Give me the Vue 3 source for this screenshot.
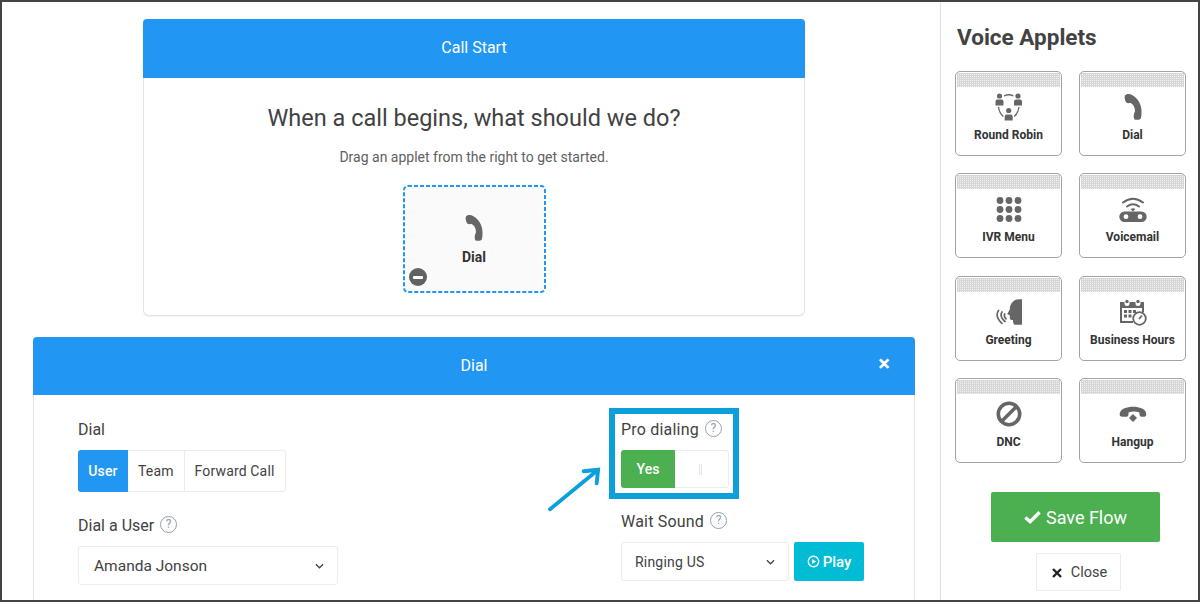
<template>
  <div class="frame">
    <svg class="defs" aria-hidden="true">
      <symbol id="i-phone" viewBox="0 -1 18 27">
        <path d="M1 1.500C3-.5 6-.2 8 1c5.500 3 9.500 9 9.500 16 0 3 0 6-1 8-1.500 1-4.500 1-6 .5-1-1.500-1-4.500-.3-6.500.6-.5.8-1.500.7-3-.2-3.500-1.800-5.500-4.200-7-1.500 0-3 .5-4.500-.5C1 6 0 3.500 1 1.500Z" />
      </symbol>
      <symbol id="i-robin" viewBox="0 0 28 28">
        <circle cx="4.500" cy="3" r="2.600" />
        <circle cx="23" cy="3" r="2.600" />
        <circle cx="13.700" cy="17.500" r="2.600" />
        <path d="M.5 8.500q0-2 2-2h4q2 0 2 2v4h-8ZM19 8.500q0-2 2-2h4q2 0 2 2v4h-8ZM9.700 23.500q0-2 2-2h4q2 0 2 2v4h-8Z" />
        <path d="M9 3q4.700-2.500 9.500 0M3.500 14q.8 6 4.800 9.500M24 14q-.8 6-4.800 9.500" fill="none" stroke="currentColor" stroke-width="1.300" />
      </symbol>
      <symbol id="i-grid" viewBox="0 0 26 28">
        <circle cx="4" cy="5.500" r="3.400" /><circle cx="13" cy="5.500" r="3.400" /><circle cx="22" cy="5.500" r="3.400" />
        <circle cx="4" cy="14.500" r="3.400" /><circle cx="13" cy="14.500" r="3.400" /><circle cx="22" cy="14.500" r="3.400" />
        <circle cx="4" cy="23.500" r="3.400" /><circle cx="13" cy="23.500" r="3.400" /><circle cx="22" cy="23.500" r="3.400" />
      </symbol>
      <symbol id="i-voicemail" viewBox="0 0 28 28">
        <path d="M4 7.500Q14 0 24 7.500M8 11.500q6-4.500 12 0" fill="none" stroke="currentColor" stroke-width="2" stroke-linecap="round" />
        <path d="M11.500 14q2.500-1.500 5 0L14 16.500Z" />
        <path fill-rule="evenodd" d="M5.500 16.500h17a5.200 5.200 0 0 1 0 10.400h-17a5.200 5.200 0 0 1 0-10.400ZM7 19.300a2.400 2.400 0 1 0 0 4.800 2.400 2.400 0 0 0 0-4.800ZM21 19.300a2.400 2.400 0 1 0 0 4.800 2.400 2.400 0 0 0 0-4.800Z" />
      </symbol>
      <symbol id="i-greeting" viewBox="0 0 28 28">
        <path d="M27 1.300V26.700H19.500c-1.500-1-1.500-3-1.500-4.700-2 .2-3.200-.3-3.200-2.300v-2.500l-2-.7c-.6-.5-.6-1 0-1.500l2-3.500C14.800 5.500 19 1.300 24 1.300Z" />
        <path d="M3.500 12.500q-4 6 3.500 13M7 14q-2.800 4.500 3 9.500M9.700 16q-1.200 2.300 1.300 4.800" fill="none" stroke="currentColor" stroke-width="1.700" stroke-linecap="round" />
      </symbol>
      <symbol id="i-calendar" viewBox="0 0 28 28">
        <path fill-rule="evenodd" d="M1 4h4.500v1.500a2.500 2.500 0 0 0 5 0V4h6v1.500a2.500 2.500 0 0 0 5 0V4H25v10.500h-2V10H3v13h11v2H1Z" />
        <circle cx="8" cy="3.500" r="1.700" /><circle cx="19" cy="3.500" r="1.700" />
        <path d="M5 12h3v3H5ZM9.500 12h3v3h-3ZM14 12h3v3h-3ZM5 16.500h3v3H5ZM9.500 16.500h3v3h-3Z" />
        <circle cx="20.500" cy="20.500" r="6.300" fill="#fff" stroke="currentColor" stroke-width="1.800" />
        <path d="m20 21 3-3.500" fill="none" stroke="currentColor" stroke-width="1.800" />
      </symbol>
      <symbol id="i-ban" viewBox="0 0 26 28">
        <circle cx="13" cy="14" r="10.700" fill="none" stroke="currentColor" stroke-width="3.600" />
        <path d="M6 21 20 7" fill="none" stroke="currentColor" stroke-width="3.600" />
      </symbol>
      <symbol id="i-hangup" viewBox="0 0 28 28">
        <g transform="translate(0 4.500)">
          <path d="M1 11.500C0 8 2 5.500 5 4c5.500-2.500 12.500-2.500 18 0 3 1.500 5 4 4 7.500-1.500 1-4 1-5.500.5-1-1-1.200-2.500-1-4-3.800-1.200-7.200-1.200-11 0 .2 1.500 0 3-1 4-1.500.5-6 .5-7.500-.5Z" />
          <path d="M14 9.500l4 4-4 4-4-4Z" />
        </g>
      </symbol>
    </svg>

    <main class="canvas">
      <section class="start-card">
        <header class="bar">Call Start</header>
        <div class="start-body">
          <h1>When a call begins, what should we do?</h1>
          <p>Drag an applet from the right to get started.</p>
          <div class="drop">
            <svg class="drop-border"><rect x="1" y="1" width="141" height="106" rx="4" /></svg>
            <svg class="drop-icon"><use href="#i-phone" /></svg>
            <strong>Dial</strong>
            <span class="remove"><i></i></span>
          </div>
        </div>
      </section>

      <section class="panel">
        <header class="bar">
          Dial
          <span class="close-x">×</span>
        </header>
        <div class="panel-body">
          <div class="col-left">
            <label>Dial</label>
            <div class="btn-group">
              <span class="seg active">User</span>
              <span class="seg">Team</span>
              <span class="seg">Forward Call</span>
            </div>
            <label class="second">Dial a User <span class="help">?</span></label>
            <div class="select user-select">
              <span>Amanda Jonson</span>
              <svg class="chev" viewBox="0 0 10 6"><path d="m1 1 4 4 4-4" /></svg>
            </div>
          </div>
          <div class="col-right">
            <div class="highlight">
              <label>Pro dialing <span class="help">?</span></label>
              <div class="toggle">
                <span class="toggle-on">Yes</span>
                <span class="toggle-off"><i></i></span>
              </div>
            </div>
            <label class="wait">Wait Sound <span class="help">?</span></label>
            <div class="sound-row">
              <div class="select sound-select">
                <span>Ringing US</span>
                <svg class="chev" viewBox="0 0 10 6"><path d="m1 1 4 4 4-4" /></svg>
              </div>
              <span class="play">
                <svg viewBox="0 0 14 14"><circle cx="7" cy="7" r="5.600" /><path d="M5.500 4.300 9.800 7l-4.300 2.700Z" /></svg>
                Play
              </span>
            </div>
            <svg class="arrow" viewBox="0 0 60 52">
              <path d="M3 47 53 6M38 7.500 53 6 51.500 20" />
            </svg>
          </div>
        </div>
      </section>
    </main>

    <aside class="sidebar">
      <h2>Voice Applets</h2>
      <div class="applets">
        <div v-for="a in applets" :key="a.name" class="applet">
          <div class="dots"></div>
          <svg class="applet-icon" :style="{ width: a.w + 'px', height: a.h + 'px' }"><use :href="'#i-' + a.icon" /></svg>
          <span class="applet-name">{{ a.name }}</span>
        </div>
      </div>
      <button class="save">
        <svg viewBox="0 0 18 14"><path d="M1.500 7.500 6.500 12 16.500 2" /></svg>
        Save Flow
      </button>
      <button class="close">
        <svg viewBox="0 0 10 10"><path d="m1 1 8 8M9 1 1 9" /></svg>
        Close
      </button>
    </aside>
  </div>
</template>

<script setup>
const applets = [
  { name: "Round Robin", icon: "robin", w: 28, h: 28 },
  { name: "Dial", icon: "phone", w: 18, h: 27 },
  { name: "IVR Menu", icon: "grid", w: 26, h: 28 },
  { name: "Voicemail", icon: "voicemail", w: 28, h: 28 },
  { name: "Greeting", icon: "greeting", w: 28, h: 28 },
  { name: "Business Hours", icon: "calendar", w: 28, h: 28 },
  { name: "DNC", icon: "ban", w: 26, h: 28 },
  { name: "Hangup", icon: "hangup", w: 28, h: 28 },
];
</script>

<style>
html,
body {
  margin: 0;
  overflow: hidden;
  background: #fff;
}
</style>

<style scoped>
.frame {
  box-sizing: border-box;
  width: 1200px;
  height: 602px;
  display: flex;
  border: 2px solid #444;
  background: #fff;
  overflow: hidden;
  font-family: Roboto, "Liberation Sans", sans-serif;
  color: #424242;
}

.defs {
  position: absolute;
  width: 0;
  height: 0;
}

.canvas {
  box-sizing: border-box;
  width: 938px;
  padding: 17px 25px 0 31px;
  flex: none;
}

.bar {
  position: relative;
  height: 58px;
  line-height: 58px;
  text-align: center;
  background: #2196f3;
  color: #fff;
  font-size: 16px;
  border-radius: 4px 4px 0 0;
}

.start-card {
  width: 662px;
  margin: 0 auto 21px;
  border-radius: 4px;
}

.start-card .bar {
  height: 59px;
}

.start-body {
  box-sizing: border-box;
  height: 238px;
  border: 1px solid #e3e3e3;
  border-top: 0;
  border-radius: 0 0 6px 6px;
  box-shadow: 0 1px 1px rgba(0, 0, 0, 0.05);
  display: flex;
  flex-direction: column;
  align-items: center;
}

h1 {
  margin: 25px 0 0;
  font-size: 23.500px;
  line-height: 30px;
  font-weight: 400;
  color: #424242;
}

.start-body p {
  margin: 15px 0 0;
  font-size: 14px;
  line-height: 18px;
  color: #616161;
}

.drop {
  box-sizing: border-box;
  position: relative;
  width: 143px;
  height: 108px;
  margin-top: 19px;
  border-radius: 5px;
  background: #fafafa;
  display: flex;
  flex-direction: column;
  align-items: center;
}

.drop-border {
  position: absolute;
  inset: 0;
  width: 100%;
  height: 100%;
  fill: none;
  stroke: #2196f3;
  stroke-width: 2;
  stroke-dasharray: 4 2;
}

.drop-icon {
  width: 18px;
  height: 27px;
  margin-top: 29px;
  fill: #666;
}

.drop strong {
  margin-top: 8px;
  font-size: 14px;
  font-weight: 700;
  color: #333;
}

.remove {
  position: absolute;
  left: 6px;
  bottom: 7px;
  width: 18px;
  height: 18px;
  border-radius: 50%;
  background: #616161;
  display: flex;
  align-items: center;
  justify-content: center;
}

.remove i {
  width: 10px;
  height: 3px;
  background: #fff;
  border-radius: 1px;
}

.panel {
  width: 882px;
}

.close-x {
  position: absolute;
  right: 25px;
  top: -2px;
  font-size: 22px;
  font-weight: 700;
}

.panel-body {
  box-sizing: border-box;
  height: 220px;
  border: 1px solid #e3e3e3;
  border-top: 0;
  display: flex;
  padding-left: 44px;
}

label {
  display: block;
  height: 20px;
  font-size: 16px;
  line-height: 22px;
  color: #424242;
}

.col-left {
  width: 543px;
  flex: none;
  padding-top: 24px;
}

.btn-group {
  display: flex;
  width: max-content;
  height: 42px;
  margin-top: 11px;
  font-size: 14px;
  letter-spacing: 0.15px;
}

.seg {
  box-sizing: border-box;
  padding: 0 10px;
  border: 1px solid #ececec;
  border-left: 0;
  line-height: 40px;
  color: #424242;
}

.seg:last-child {
  border-radius: 0 3px 3px 0;
}

.seg.active {
  width: 50px;
  padding: 0;
  text-align: center;
  border: 0;
  line-height: 42px;
  background: #2196f3;
  color: #fff;
  font-weight: 500;
  border-radius: 3px 0 0 3px;
}

.second {
  margin-top: 23px;
}

.help {
  display: inline-block;
  box-sizing: border-box;
  width: 17px;
  height: 17px;
  margin-left: 2px;
  border: 1px solid #8fa0ab;
  border-radius: 50%;
  color: #8fa0ab;
  font-size: 12px;
  line-height: 15px;
  text-align: center;
  vertical-align: 3px;
}

.select {
  box-sizing: border-box;
  display: flex;
  align-items: center;
  justify-content: space-between;
  height: 39px;
  border: 1px solid #ececec;
  border-radius: 3px;
  color: #424242;
}

.user-select {
  width: 260px;
  margin-top: 11px;
  padding: 0 13px 0 15px;
  font-size: 15.500px;
}

.chev {
  width: 9px;
  height: 6px;
  fill: none;
  stroke: #444;
  stroke-width: 1.400;
}

.col-right {
  position: relative;
  padding-top: 13px;
  margin-left: -12px;
}

.col-right label {
  letter-spacing: 0.2px;
}

.highlight {
  box-sizing: border-box;
  width: 130px;
  height: 91px;
  padding: 5px 6px 6px;
  border: 6px solid #0b9fdc;
}

.toggle {
  display: flex;
  width: 108px;
  height: 38px;
  margin-top: 11px;
  box-sizing: border-box;
  border: 1px solid #ececec;
  border-radius: 3px;
}

.toggle-on {
  width: 54px;
  margin: -1px 0 -1px -1px;
  background: #4caf50;
  color: #fff;
  font-size: 14px;
  font-weight: 500;
  line-height: 39px;
  text-align: center;
  border-radius: 3px 0 0 3px;
}

.toggle-off {
  flex: 1;
  display: flex;
  align-items: center;
  justify-content: center;
  padding-right: 2px;
}

.toggle-off i {
  width: 3px;
  height: 11px;
  border: 1px solid #e4e4e4;
  border-width: 0 1px;
  box-sizing: border-box;
}

.wait {
  margin: 12px 0 0 12px;
}

.sound-row {
  display: flex;
  gap: 5px;
  margin: 11px 0 0 12px;
}

.sound-select {
  width: 168px;
  padding: 0 13px;
  font-size: 14px;
  letter-spacing: 0.2px;
}

.play {
  width: 70px;
  height: 39px;
  display: flex;
  align-items: center;
  justify-content: center;
  gap: 3px;
  background: #00bcd4;
  color: #fff;
  font-size: 15px;
  font-weight: 500;
  border-radius: 2px;
}

.play svg {
  width: 13px;
  height: 13px;
  fill: none;
  stroke: #fff;
  stroke-width: 1.500;
}

.play svg path {
  fill: #fff;
  stroke: none;
}

.arrow {
  position: absolute;
  left: -62px;
  top: 69px;
  width: 58px;
  height: 50px;
  fill: none;
  stroke: #0b9fdc;
  stroke-width: 4;
  stroke-linecap: round;
}

.sidebar {
  box-sizing: border-box;
  flex: 1;
  border-left: 1px solid #e0e0e0;
  padding-left: 14px;
  display: flex;
  flex-direction: column;
  align-items: flex-start;
}

h2 {
  margin: 21px 0 0 2px;
  font-size: 22.500px;
  line-height: 28px;
  font-weight: 700;
  color: #424242;
}

.applets {
  display: grid;
  grid-template-columns: 107px 107px;
  grid-auto-rows: 85px;
  column-gap: 17px;
  row-gap: 17.400px;
  margin-top: 20px;
}

.applet {
  box-sizing: border-box;
  border: 1px solid #a3a3a3;
  border-radius: 5px;
  display: flex;
  flex-direction: column;
  align-items: center;
  overflow: hidden;
}

.dots {
  flex: none;
  align-self: stretch;
  height: 14px;
  margin: 1px 1px 0;
  background-color: #f2f2f2;
  background-image: linear-gradient(90deg, #d6d6d6 1px, transparent 1px), linear-gradient(#d6d6d6 1px, transparent 1px);
  background-size: 2px 2px;
}

.applet-icon {
  flex: none;
  fill: #666;
  color: #666;
  margin-top: 6px;
}

.applet-name {
  margin-top: auto;
  margin-bottom: 13px;
  font-size: 12px;
  line-height: 14px;
  font-weight: 700;
  color: #333;
  white-space: nowrap;
}

button {
  font-family: inherit;
  cursor: pointer;
}

.save {
  width: 169px;
  height: 50px;
  margin: 29px 0 0 36px;
  display: flex;
  align-items: center;
  justify-content: center;
  gap: 5px;
  border: 0;
  border-radius: 2px;
  background: #4caf50;
  color: #fff;
  font-size: 18px;
  padding: 0;
}

.save svg {
  width: 17px;
  height: 14px;
  fill: none;
  stroke: #fff;
  stroke-width: 3.500;
}

.close {
  width: 85px;
  height: 38px;
  margin: 11px 0 0 81px;
  display: flex;
  align-items: center;
  justify-content: center;
  gap: 9px;
  border: 1px solid #ececec;
  border-radius: 2px;
  background: #fff;
  color: #424242;
  font-size: 14.500px;
  padding: 1px 0 0 2px;
}

.close svg {
  width: 10px;
  height: 10px;
  fill: none;
  stroke: #222;
  stroke-width: 2.400;
}
</style>
